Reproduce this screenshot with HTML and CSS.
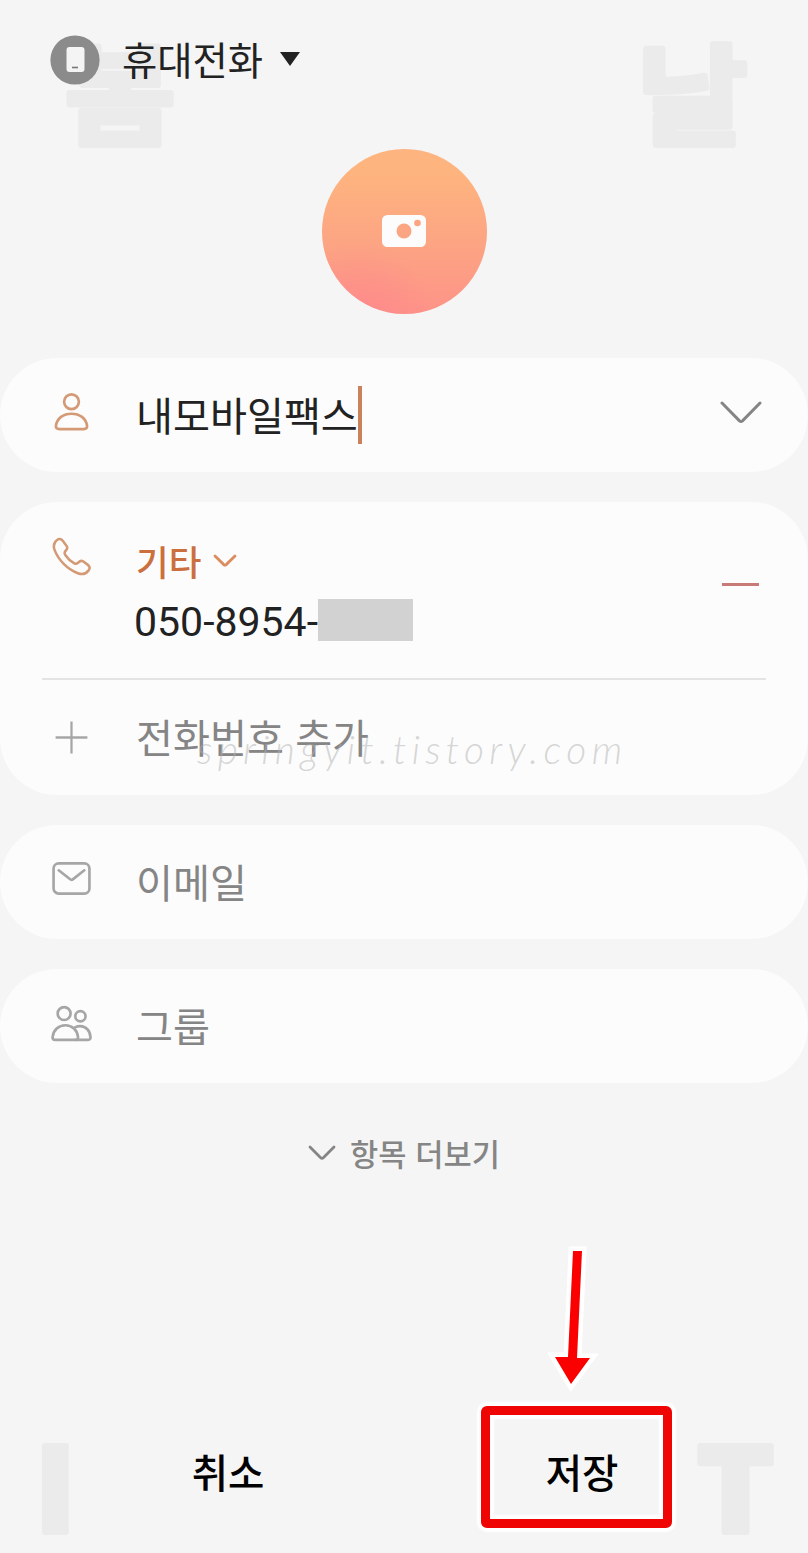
FILE: index.html
```html
<!DOCTYPE html>
<html lang="ko">
<head>
    <meta charset="UTF-8">
    <title>연락처 추가</title>
    <link rel="stylesheet" href="styles.css">
</head>
<body>
    <div class="screen">
        <svg class="marks" width="808" height="1553" viewBox="0 0 808 1553">
            <text transform="translate(65 136) scale(1.100 1)">봄</text>
            <text transform="translate(637 136) scale(1.100 1)">날</text>
            <text class="latin" transform="translate(35 1532)">I</text>
            <text class="latin" transform="translate(697 1532) scale(1.040 1)">T</text>
        </svg>

        <header class="account">
            <svg class="account-icon" width="50" height="50" viewBox="0 0 50 50">
                <circle cx="25" cy="25" r="24.600" fill="#8b8b8b"/>
                <rect x="16.500" y="12" width="18" height="25" rx="3" fill="#f4f4f4"/>
                <path d="M22 32.500h6" stroke="#777" stroke-width="1.600"/>
            </svg>
            <span class="account-name">휴대전화</span>
            <svg class="account-arrow" width="20" height="14" viewBox="0 0 20 14"><path d="M0 0h20L10 14z" fill="#222"/></svg>
        </header>

        <div class="photo">
            <svg width="44" height="32" viewBox="0 0 44 32">
                <rect width="44" height="32" rx="5.500" fill="#fcfcfc"/>
                <circle cx="22" cy="16" r="7.500" fill="#fca583"/>
                <circle cx="35.500" cy="8" r="3.300" fill="#fca583"/>
            </svg>
        </div>

        <main class="cards">
            <section class="card row name-row">
                <svg class="icon orange" viewBox="0 0 40 40">
                    <circle cx="20" cy="9.500" r="7.200"/>
                    <path d="M8 36.200h24q3.300 0 3.200-3C34.200 25.500 28 21.200 20 21.200S5.800 25.500 4.800 33.200q-.1 3 3.200 3z"/>
                </svg>
                <span class="value">내모바일팩스</span>
                <span class="caret"></span>
                <svg class="expand" width="42" height="23" viewBox="0 0 42 23"><path d="M2 2l17.500 17.800q1.500 1.300 3 0L40 2"/></svg>
            </section>

            <section class="card">
                <div class="phone-row">
                    <svg class="icon orange phone-icon" viewBox="0 0 40 40">
                        <path d="M5 3.200C7.500 1.200 9.500 1.800 11 3.800l4 5.400c1 1.600.8 3-.6 4.400-1.700 1.700-2 3-.8 4.800 2.200 3.400 5.600 6.500 9.300 8.600 1.800 1 3.100.5 4.600-1.200 1.300-1.500 3-1.800 4.700-.6l4.600 3.400c2.200 1.700 2.300 3.700.6 5.900-2.600 3.300-6.600 4.300-10.900 2.700C15.800 33 6.500 23.500 2.700 13.500 1.200 9.600 2 5.700 5 3.200z"/>
                    </svg>
                    <div class="phone">
                        <div class="phone-type">
                            <span>기타</span>
                            <svg width="24" height="14" viewBox="0 0 24 14"><path d="M2 2l8.800 8.600q1.200 1 2.400 0L22 2"/></svg>
                        </div>
                        <div class="phone-number"><span class="digits">050-8954-</span><span class="hidden-digits"></span></div>
                    </div>
                    <span class="remove"></span>
                </div>
                <div class="row add-row">
                    <svg class="icon plus" viewBox="0 0 40 40"><path d="M4.500 20h31M20 4.500v31"/></svg>
                    <span class="hint">전화번호 추가</span>
                </div>
                <span class="site">springyit.tistory.com</span>
            </section>

            <section class="card row mail-row">
                <svg class="icon" viewBox="0 0 40 40">
                    <rect x="2.500" y="5.300" width="35" height="29.400" rx="5"/>
                    <path d="M7.500 12l11.200 8.800q1.300 1 2.600 0L32.500 12"/>
                </svg>
                <span class="hint">이메일</span>
            </section>

            <section class="card row group-row">
                <svg class="icon" viewBox="0 0 40 40">
                    <circle cx="12.800" cy="9.300" r="6.300"/>
                    <circle cx="28.700" cy="12" r="5"/>
                    <path d="M4 35h20q2.500 0 2.400-2.500C25.800 25.500 20.500 20.700 14 20.700S2.200 25.500 1.500 32.500Q1.500 35 4 35z"/>
                    <path d="M23.500 22.800c1.700-.9 3.200-1.200 5-1.200 5.500 0 9.800 4.600 10 10.700q.2 2.700-2.300 2.700H24"/>
                </svg>
                <span class="hint">그룹</span>
            </section>
        </main>

        <div class="more">
            <svg width="28" height="16" viewBox="0 0 28 16"><path d="M2 2l10.700 10.800q1.300 1.200 2.600 0L26 2"/></svg>
            <span>항목 더보기</span>
        </div>

        <footer class="actions">
            <button class="action">취소</button>
            <button class="action save">저장</button>
        </footer>

        <!-- 저장 버튼 강조 -->
        <svg class="arrow" width="60" height="160" viewBox="0 0 60 160">
            <path d="M33 20h9l-5 107h13L31 153 15 126h13z" fill="none" stroke="#fff" stroke-width="9"/>
            <path d="M33 20h9l-5 107h13L31 153 15 126h13z" fill="#fb0000"/>
        </svg>
        <div class="highlight"></div>
    </div>
</body>
</html>
```

FILE: styles.css
```css
* {
    box-sizing: border-box;
}

body {
    margin: 0;
    background: #f5f5f5;
    font-family: "Noto Sans CJK KR", sans-serif;
    color: #222;
}

.screen {
    position: relative;
    width: 808px;
    height: 1553px;
    overflow: hidden;
    display: flex;
    flex-direction: column;
}

svg {
    display: block;
    flex: none;
}

/* 배경 글자 */
.marks {
    position: absolute;
    left: 0;
    top: 0;
    fill: #ebebeb;
    stroke: #ebebeb;
    stroke-width: 6;
    stroke-linejoin: round;
    font-size: 109px;
    font-weight: 700;
}

.marks .latin {
    font-size: 116px;
    font-weight: 900;
}

.account {
    position: relative;
    display: flex;
    align-items: center;
    height: 50px;
    margin: 35px 0 0 50px;
}

.account-name {
    margin: 0 17px 0 22px;
    padding-bottom: 2px;
    font-size: 38.300px;
    line-height: 46px;
}

.account-arrow {
    margin-bottom: 2px;
}

.photo {
    width: 165px;
    height: 165px;
    margin: 64px auto 0;
    padding-bottom: 2px;
    border-radius: 50%;
    background:
        radial-gradient(circle at 22% 104%, rgba(255, 130, 142, 0.6) 0%, rgba(255, 133, 138, 0) 36%),
        linear-gradient(#feb47f 15%, #fca483 58%, #fe9388 100%);
    display: flex;
    align-items: center;
    justify-content: center;
}

.cards {
    display: flex;
    flex-direction: column;
    gap: 30px;
    margin-top: 44px;
}

.card {
    position: relative;
    background: #fcfcfc;
    border-radius: 57px;
}

.row {
    display: flex;
    align-items: center;
    height: 114px;
    padding: 0 46px 0 51px;
}

.icon {
    width: 41px;
    height: 41px;
    margin-right: 44px;
    fill: none;
    stroke: #a6a6a6;
    stroke-width: 2.600;
    stroke-linecap: round;
    stroke-linejoin: round;
}

.icon.orange {
    stroke: #d49a75;
}

.name-row .icon,
.expand {
    margin-bottom: 6px;
}

.mail-row .icon {
    margin-bottom: 8px;
}

.group-row .icon {
    margin-bottom: 3px;
}

.value,
.hint {
    padding-bottom: 2px;
    font-size: 40.200px;
    line-height: 56px;
}

.hint {
    color: #858585;
}

.add-row .hint {
    padding-bottom: 4px;
}

.caret {
    width: 4px;
    height: 58px;
    background: #c9825a;
}

.expand {
    margin-left: auto;
    fill: none;
    stroke: #858585;
    stroke-width: 3;
    stroke-linecap: round;
}

.phone-row {
    display: flex;
    height: 178px;
    margin: 0 42px;
    padding: 35px 7px 0 9px;
    border-bottom: 2px solid #e4e4e4;
}

.phone-icon {
    width: 39px;
    height: 39px;
    margin: 0 44px 0 1px;
}

.phone-type {
    display: flex;
    align-items: center;
    gap: 12px;
    height: 48px;
    margin-left: 1px;
    font-size: 35.500px;
    font-weight: 500;
    line-height: 48px;
    color: #cb6f3f;
}

.phone-type span {
    padding-bottom: 1px;
}

.phone-type svg {
    fill: none;
    stroke: #dc8d60;
    stroke-width: 2.800;
    stroke-linecap: round;
}

.phone-number {
    display: flex;
    align-items: center;
    height: 70px;
    margin-left: -1px;
    font-family: Roboto, sans-serif;
    font-size: 41px;
}

.digits {
    padding-top: 3px;
}

.hidden-digits {
    width: 95px;
    height: 42px;
    background: #d2d2d2;
}

.remove {
    width: 37px;
    height: 3px;
    margin: 46px 0 0 auto;
    background: #c77a76;
}

.add-row {
    height: 115px;
}

.plus {
    stroke-width: 2.200;
    stroke-linecap: butt;
}

.site {
    position: absolute;
    left: 197px;
    top: 220px;
    font-family: Lato, sans-serif;
    font-style: italic;
    font-weight: 300;
    font-size: 39px;
    line-height: 54px;
    letter-spacing: 5.300px;
    color: rgba(175, 175, 175, 0.5);
}

.more {
    display: flex;
    justify-content: center;
    align-items: center;
    gap: 14px;
    height: 50px;
    margin-top: 45px;
    font-size: 30.700px;
    font-weight: 500;
    color: #858585;
}

.more span {
    padding-bottom: 2px;
}

.more svg {
    fill: none;
    stroke: #858585;
    stroke-width: 2.800;
    stroke-linecap: round;
}

.actions {
    position: relative;
    display: flex;
    justify-content: space-between;
    margin: 262px 49px 0 51px;
}

.action {
    width: 354px;
    height: 60px;
    padding: 0;
    border: none;
    background: none;
    font-family: inherit;
    font-size: 39.500px;
    font-weight: 500;
    color: #000;
    cursor: pointer;
}

/* 강조 표시 */
.arrow {
    position: absolute;
    left: 540px;
    top: 1231px;
}

.highlight {
    position: absolute;
    left: 481px;
    top: 1406px;
    width: 191px;
    height: 122px;
    border: 9px solid #f00505;
    border-radius: 6px;
    box-shadow: 0 0 2px 4px #fff, inset 0 0 2px 4px #fff;
}
```
